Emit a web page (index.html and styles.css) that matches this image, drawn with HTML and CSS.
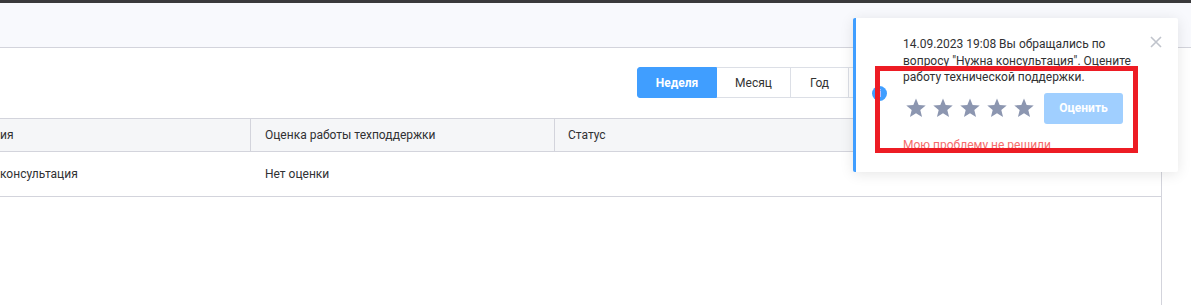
FILE: index.html
```html
<!DOCTYPE html>
<html lang="ru">
<head>
<meta charset="utf-8">
<title>Обращения</title>
<link rel="stylesheet" href="styles.css">
</head>
<body>
<div class="topbar"></div>
<header class="subheader"></header>
<main class="content">
  <div class="tabs-row">
    <div class="tabs">
      <button class="tab active">Неделя</button>
      <button class="tab">Месяц</button>
      <button class="tab tab-year">Год</button>
      <button class="tab tab-all">Всё время</button>
    </div>
  </div>
  <div class="table">
    <div class="row head">
      <div class="cell c1">ия</div>
      <div class="cell c2">Оценка работы техподдержки</div>
      <div class="cell c3">Статус</div>
    </div>
    <div class="row body">
      <div class="cell c1">консультация</div>
      <div class="cell c2">Нет оценки</div>
      <div class="cell c3"></div>
    </div>
    <div class="table-rest"></div>
  </div>
</main>

<div class="notify">
  <span class="info-icon">i</span>
  <span class="close">
    <svg width="12" height="12" viewBox="0 0 12 12"><path d="M1 1 L11 11 M11 1 L1 11" stroke="#c0c4cc" stroke-width="1.6" fill="none"/></svg>
  </span>
  <p class="notify-text">14.09.2023 19:08 Вы обращались по вопросу "Нужна консультация". Оцените работу технической поддержки.</p>
  <div class="rate-row">
    <div class="stars">
      <svg class="star" viewBox="0 0 24 24"><path d="M12 1.5 L14.9 8.6 L22.6 9.2 L16.7 14.2 L18.6 21.7 L12 17.6 L5.4 21.7 L7.3 14.2 L1.4 9.2 L9.1 8.6 Z"/></svg>
      <svg class="star" viewBox="0 0 24 24"><path d="M12 1.5 L14.9 8.6 L22.6 9.2 L16.7 14.2 L18.6 21.7 L12 17.6 L5.4 21.7 L7.3 14.2 L1.4 9.2 L9.1 8.6 Z"/></svg>
      <svg class="star" viewBox="0 0 24 24"><path d="M12 1.5 L14.9 8.6 L22.6 9.2 L16.7 14.2 L18.6 21.7 L12 17.6 L5.4 21.7 L7.3 14.2 L1.4 9.2 L9.1 8.6 Z"/></svg>
      <svg class="star" viewBox="0 0 24 24"><path d="M12 1.5 L14.9 8.6 L22.6 9.2 L16.7 14.2 L18.6 21.7 L12 17.6 L5.4 21.7 L7.3 14.2 L1.4 9.2 L9.1 8.6 Z"/></svg>
      <svg class="star" viewBox="0 0 24 24"><path d="M12 1.5 L14.9 8.6 L22.6 9.2 L16.7 14.2 L18.6 21.7 L12 17.6 L5.4 21.7 L7.3 14.2 L1.4 9.2 L9.1 8.6 Z"/></svg>
    </div>
    <button class="rate-btn" disabled>Оценить</button>
  </div>
  <a class="not-solved">Мою проблему не решили</a>
</div>

<div class="highlight"></div>
</body>
</html>
```

FILE: styles.css
```css
* { box-sizing: border-box; }
html, body { margin: 0; padding: 0; }
body {
  width: 1191px;
  height: 305px;
  overflow: hidden;
  position: relative;
  background: #fff;
  font-family: Roboto, "Liberation Sans", Arial, sans-serif;
  font-size: 12px;
  color: #303133;
}
.topbar { height: 3px; background: #3a3a3c; }
.subheader {
  height: 45px;
  background: #f8f9fd;
  border-bottom: 1px solid #d3d4dc;
}
.content { padding-top: 19px; }
.tabs-row { display: flex; padding-left: 637px; }
.tabs { display: flex; }
.tab {
  height: 31px;
  border: 1px solid #dcdfe6;
  border-left: none;
  background: #fff;
  font-family: inherit;
  font-size: 12px;
  color: #333;
  padding: 0;
  margin: 0;
}
.tab:first-child { border-left: 1px solid #dcdfe6; border-radius: 3px 0 0 3px; }
.tab:last-child { border-radius: 0 3px 3px 0; }
.tab.active {
  width: 80px;
  background: #409eff;
  border-color: #409eff;
  color: #fff;
  font-weight: 700;
}
.tab:nth-child(2) { width: 74px; }
.tab-year { width: 58px; }
.tab-all { width: 90px; }

.table {
  margin-top: 20px;
  width: 1162px;
  border-right: 1px solid #d3d4dc;
}
.row { display: flex; }
.row.head {
  height: 34px;
  background: #f5f6f8;
  border-top: 1px solid #d3d4dc;
  border-bottom: 1px solid #d3d4dc;
}
.row.body {
  height: 45px;
  border-bottom: 1px solid #d3d4dc;
}
.cell { display: flex; align-items: center; color: #303133; }
.c1 { width: 250px; padding-left: 0; }
.c2 { width: 304px; padding-left: 14px; }
.c3 { flex: 1; padding-left: 13px; }
.row.head .c2, .row.head .c3 { border-left: 1px solid #d3d4dc; }
.row.body .c2 { padding-left: 14px; }
.row.body .c2, .row.body .c3 { border-left: 1px solid transparent; }
.table-rest { height: 120px; }

.notify {
  position: absolute;
  left: 853px;
  top: 18px;
  width: 325px;
  height: 154px;
  background: #fff;
  border-left: 3px solid #409eff;
  border-radius: 2px;
  box-shadow: 0 2px 14px rgba(0, 0, 0, 0.1);
  padding: 18px 20px 0 47px;
}
.info-icon {
  position: absolute;
  left: 16px;
  top: 68px;
  width: 15px;
  height: 15px;
  border-radius: 50%;
  background: #409eff;
  color: #fff;
  font-weight: 700;
  font-size: 11px;
  line-height: 15px;
  text-align: center;
}
.close {
  position: absolute;
  right: 16px;
  top: 18px;
  width: 12px;
  height: 12px;
  display: flex;
}
.notify-text {
  margin: 0;
  width: 228px;
  line-height: 16.5px;
  color: #303133;
}
.rate-row {
  display: flex;
  align-items: center;
  margin-top: 7px;
  height: 31px;
}
.stars { display: flex; gap: 5px; margin-left: 2px; }
.star { width: 22px; height: 22px; fill: #8c96b0; }
.rate-btn {
  margin-left: 9px;
  width: 79px;
  height: 31px;
  border: none;
  border-radius: 3px;
  background: #a0cfff;
  color: #fff;
  font-family: inherit;
  font-size: 12px;
  font-weight: 700;
}
.not-solved {
  display: block;
  margin-top: 13px;
  color: #f56c6c;
  line-height: 16px;
}
.highlight {
  position: absolute;
  left: 875px;
  top: 66px;
  width: 263px;
  height: 87px;
  border: 5px solid #ed1c24;
}
```
